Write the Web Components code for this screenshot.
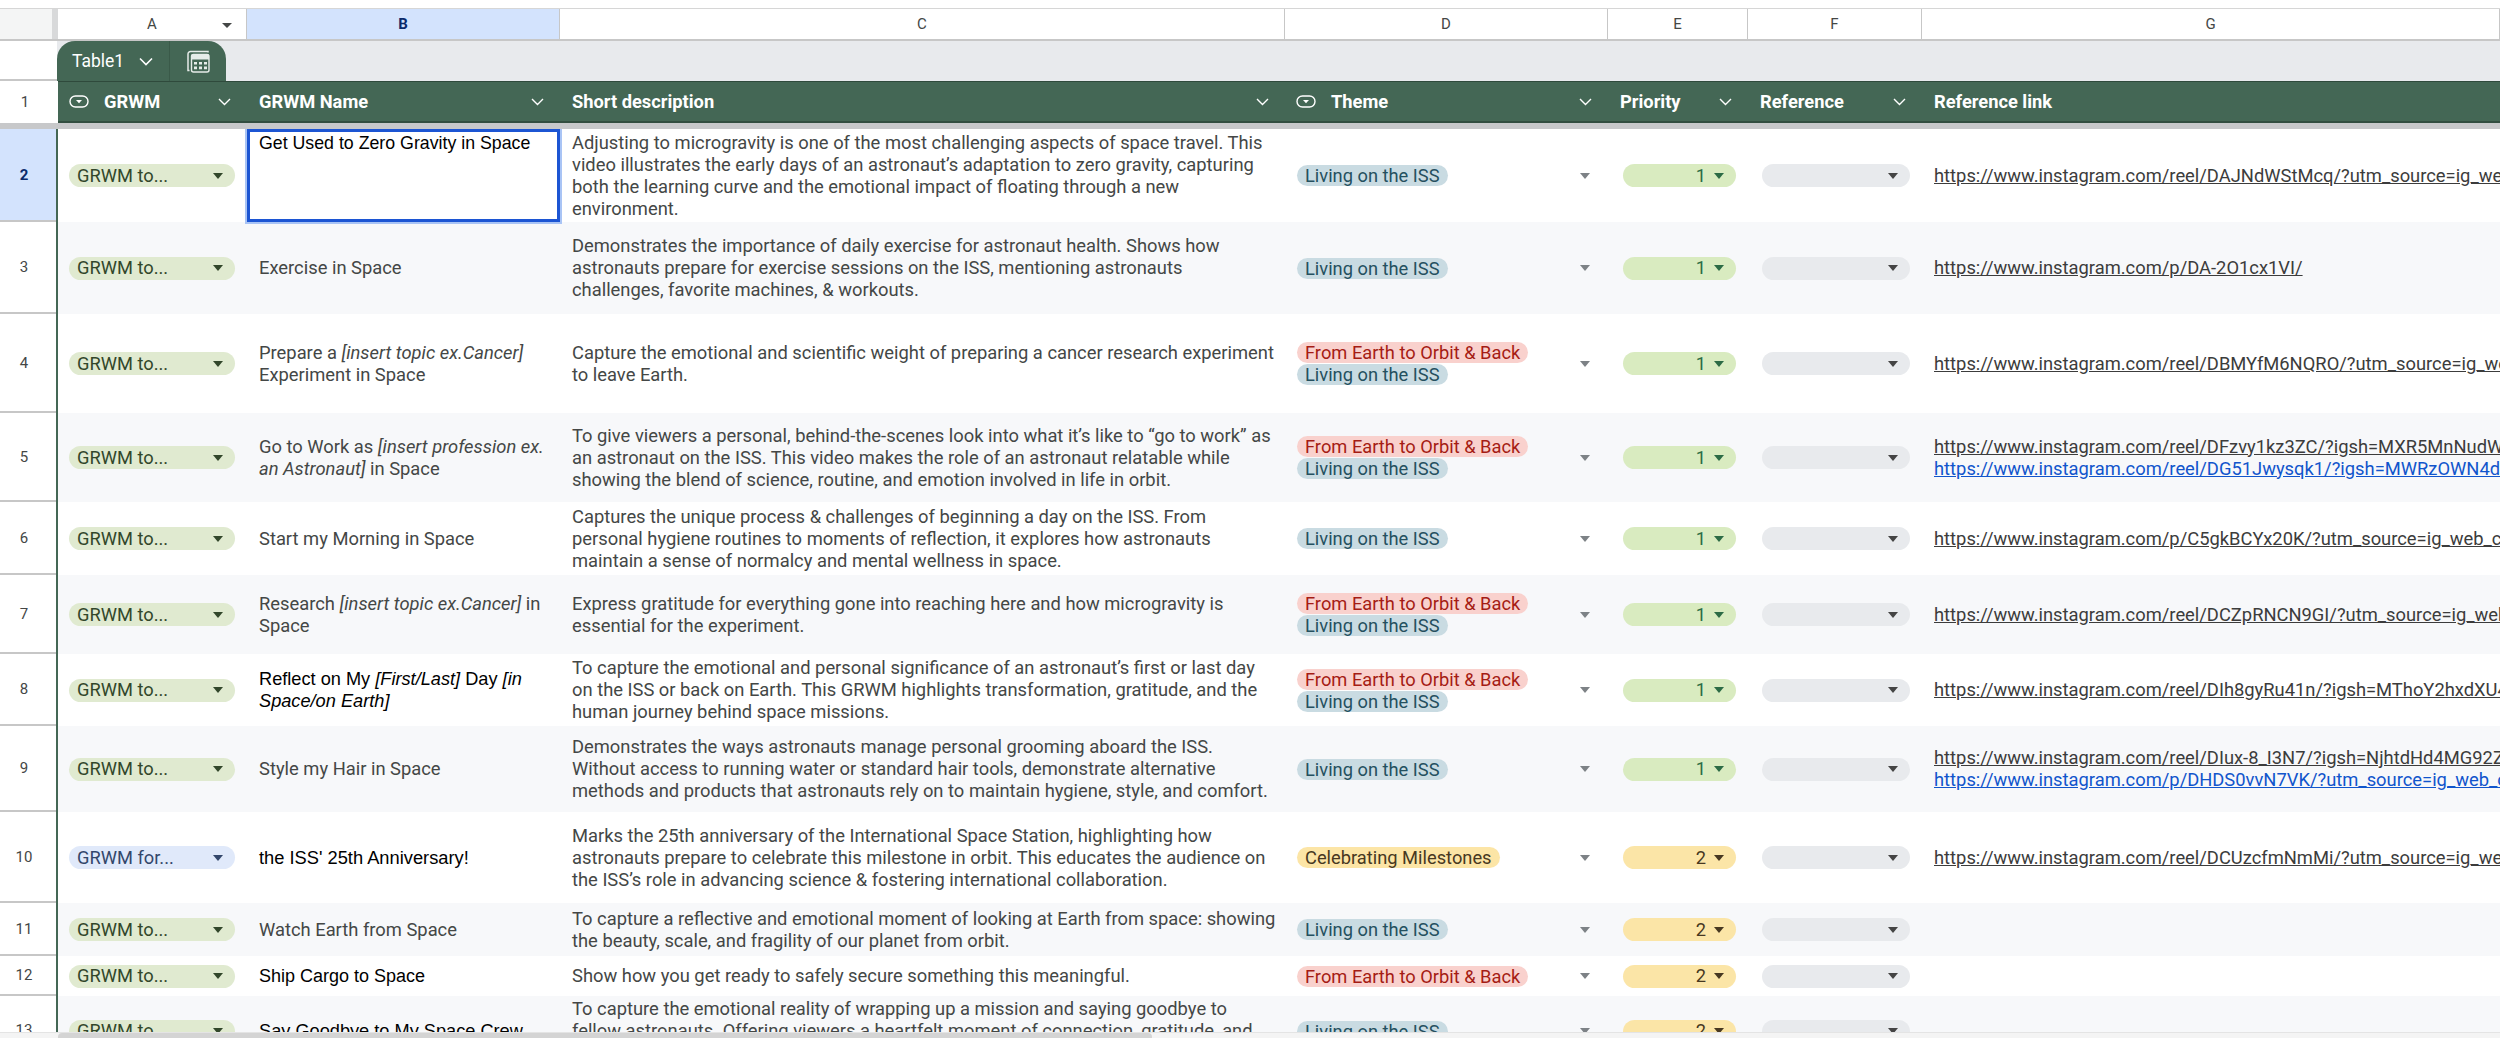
<!DOCTYPE html>
<html lang="en">
<head>
<meta charset="utf-8">
<title>GRWM sheet</title>
<style>
  html, body { margin: 0; height: 100%; overflow: hidden; background: #fff; }
</style>
</head>
<body>
<sheet-app>
  <sheet-colbar></sheet-colbar>
  <sheet-tabbar></sheet-tabbar>
  <sheet-headrow></sheet-headrow>
  <sheet-body></sheet-body>
  <sheet-scroll></sheet-scroll>
</sheet-app>
<script>
const appTemplate = document.createElement('template');
appTemplate.innerHTML = `
  <style>
    :host {
      display: flex;
      flex-direction: column;
      height: 1038px;
      overflow: hidden;
      padding-top: 8px;
      box-sizing: border-box;
      font-family: Roboto, "Liberation Sans", sans-serif;
      color: #444746;
      --cols: 56px 2px 189px 313px 725px 323px 140px 174px 578px;
    }
  </style>
  <slot></slot>
`;

class SheetApp extends HTMLElement {
  constructor() {
    super();
    this.attachShadow({ mode: 'open' }).appendChild(appTemplate.content.cloneNode(true));
  }
}

class SheetColbar extends HTMLElement {
  constructor() {
    super();
    const cells = [['A', 'a'], ['B', 'b on'], ['C', 'c'], ['D', 'd'], ['E', 'e'], ['F', 'f'], ['G', 'g']]
      .map(([letter, cls]) => `<div class="col ${cls}"><span>${letter}</span>${letter === 'A' ? '<i></i>' : ''}</div>`)
      .join('');
    this.attachShadow({ mode: 'open' }).innerHTML = `
      <style>
        :host {
          display: grid;
          grid-template-columns: var(--cols);
          height: 33px;
          flex-shrink: 0;
          box-sizing: border-box;
          border-top: 1px solid #d6d6d6;
          border-bottom: 2px solid #c7c7c7;
          font-size: 15px;
          color: #444746;
        }
        .corner { background: #f4f5f5; border-right: 6px solid #d8d9da; box-sizing: border-box; grid-column: span 2; }
        .col {
          display: flex;
          align-items: center;
          justify-content: center;
          position: relative;
          border-right: 1px solid #c7c7c7;
          box-sizing: border-box;
        }
        .on { background: #d3e3fd; color: #0b2a6b; font-weight: 700; }
        i {
          position: absolute;
          right: 14px;
          top: 14px;
          border-left: 5px solid transparent;
          border-right: 5px solid transparent;
          border-top: 5px solid #444746;
        }
      </style>
      <div class="corner"></div>${cells}`;
  }
}

class SheetTabbar extends HTMLElement {
  constructor() {
    super();
    this.attachShadow({ mode: 'open' }).innerHTML = `
      <style>
        :host {
          display: flex;
          height: 40px;
          flex-shrink: 0;
          background: #e8eaed;
        }
        .stub {
          width: 57px;
          background: #fff;
          box-sizing: border-box;
          border-bottom: 2px solid #c7c7c7;
        }
        .tab {
          display: flex;
          width: 169px;
          background: #446755;
          border-radius: 18px 18px 0 0;
          color: #fff;
          font-size: 17.5px;
          box-sizing: border-box;
        }
        .name {
          display: flex;
          align-items: center;
          gap: 15px;
          width: 113px;
          padding-left: 15px;
          box-sizing: border-box;
          border-right: 1px solid #3a5a49;
        }
        .calc { display: flex; align-items: center; justify-content: center; flex: 1; }
      </style>
      <div class="stub"></div>
      <div class="tab">
        <div class="name">Table1
          <svg width="14" height="9" viewBox="0 0 14 9"><path d="M1 1.5 7 7.5 13 1.5" fill="none" stroke="#fff" stroke-width="1.6"/></svg>
        </div>
        <div class="calc">
          <svg width="23" height="23" viewBox="0 0 23 23">
            <path d="M21 2.5V1.5H3.5A2.5 2.5 0 0 0 1 4V20.5H2.5" fill="none" stroke="#e6ece9" stroke-width="1.5"/>
            <rect x="4.5" y="4.5" width="17.5" height="17.5" rx="2" fill="none" stroke="#e6ece9" stroke-width="1.4"/>
            <rect x="4.5" y="4.5" width="17.5" height="5" fill="#e6ece9"/>
            <path d="M7 12h3v2.6H7zM12 12h3v2.6h-3zM17 12h3v2.6h-3zM7 16.6h3v2.6H7zM12 16.6h3v2.6h-3zM17 16.6h3v2.6h-3z" fill="#e6ece9"/>
          </svg>
        </div>
      </div>`;
  }
}

const pillIcon = `<svg class="pill" width="20" height="13" viewBox="0 0 20 13"><rect x="1" y="1" width="18" height="11" rx="5.5" fill="none" stroke="#fff" stroke-width="1.4"/><path d="M7 5h6l-3 3.2z" fill="#fff"/></svg>`;
const headChevron = `<svg class="chev" width="13" height="8" viewBox="0 0 13 8"><path d="M1 1 6.5 6.5 12 1" fill="none" stroke="#fff" stroke-width="1.4"/></svg>`;

class SheetHeadrow extends HTMLElement {
  constructor() {
    super();
    const cols = [
      ['GRWM', true, true], ['GRWM Name', false, true], ['Short description', false, true],
      ['Theme', true, true], ['Priority', false, true], ['Reference', false, true], ['Reference link', false, false]
    ];
    const cells = cols.map(([label, pill, chev]) =>
      `<div class="head${pill ? ' haspill' : ''}">${pill ? pillIcon : ''}<span>${label}</span>${chev ? headChevron : ''}</div>`).join('');
    this.attachShadow({ mode: 'open' }).innerHTML = `
      <style>
        :host {
          display: grid;
          grid-template-columns: var(--cols);
          height: 48px;
          flex-shrink: 0;
          box-sizing: border-box;
          border-bottom: 6px solid #c7c8ca;
        }
        .num { display: flex; align-items: center; justify-content: center; padding-right: 8px; font-size: 15px; background: #fff; grid-column: span 2; }
        .head {
          display: flex;
          align-items: center;
          gap: 15px;
          padding: 0 16px 0 12px;
          background: #446755;
          border-top: 1px solid #2f4a3c;
          border-bottom: 2px solid #324e40;
          color: #fff;
          font-size: 18.3px;
          font-weight: 700;
          min-width: 0;
          white-space: nowrap;
        }
        .haspill { padding-left: 11px; }
        .chev { margin-left: auto; }
      </style>
      <div class="num">1</div>${cells}`;
  }
}

class DropChip extends HTMLElement {
  constructor() {
    super();
    this.attachShadow({ mode: 'open' }).innerHTML = `
      <style>
        :host {
          display: flex;
          align-items: center;
          height: 23px;
          border-radius: 12px;
          padding: 0 12px 0 8px;
          font-size: 18.3px;
          background: var(--chip-bg, #e8eaed);
          color: var(--chip-ink, #444);
          box-sizing: border-box;
          white-space: nowrap;
        }
        .label { flex: 1; text-align: var(--chip-align, left); padding-right: var(--chip-gap, 0); }
        i {
          border-left: 5.5px solid transparent;
          border-right: 5.5px solid transparent;
          border-top: 6px solid var(--chip-arrow, #444);
        }
      </style>
      <span class="label"><slot></slot></span><i></i>`;
  }
}

class ThemeTags extends HTMLElement {
  constructor() {
    super();
    this.attachShadow({ mode: 'open' }).innerHTML = `
      <style>
        :host { display: flex; align-items: center; justify-content: space-between; padding: 0 18px 0 12px; }
        .tags { display: flex; flex-direction: column; align-items: flex-start; gap: 1px; }
        i {
          border-left: 5.5px solid transparent;
          border-right: 5.5px solid transparent;
          border-top: 6px solid #7d8286;
        }
      </style>
      <div class="tags"><slot></slot></div><i></i>`;
  }
}

class ThemeTag extends HTMLElement {
  constructor() {
    super();
    const kinds = {
      iss: ['#c9dbe2', '#25505f'],
      orbit: ['#f9d1cd', '#a51c14'],
      mile: ['#fce5a6', '#473821']
    };
    const [bg, ink] = kinds[this.getAttribute('kind')];
    this.attachShadow({ mode: 'open' }).innerHTML = `
      <style>
        :host {
          display: block;
          height: 21px;
          line-height: 21px;
          border-radius: 11px;
          padding: 0 8px;
          font-size: 18.3px;
          white-space: nowrap;
          background: ${bg};
          color: ${ink};
        }
      </style>
      <slot></slot>`;
  }
}

class SheetRow extends HTMLElement {
  constructor() {
    super();
    const selected = this.hasAttribute('selected');
    this.attachShadow({ mode: 'open' }).innerHTML = `
      <style>
        :host {
          display: grid;
          grid-template-columns: var(--cols);
          flex-shrink: 0;
          height: ${this.getAttribute('h')}px;
          position: relative;
          z-index: ${selected ? 2 : 0};
          background: ${this.hasAttribute('alt') ? '#f7f8fa' : '#fff'};
          font-size: 18.35px;
          line-height: 22px;
          color: #444746;
        }
        .num {
          display: flex;
          align-items: center;
          justify-content: center;
          padding: 0 8px 0 0;
          background: ${selected ? '#d3e3fd' : '#fff'};
          color: ${selected ? '#0b2a6b' : '#444746'};
          font-weight: ${selected ? 700 : 400};
          font-size: 15px;
          box-sizing: border-box;
          border-bottom: 2px solid #c7c7c7;
        }
        .bar { background: #446755; }
        .cell { display: flex; align-items: center; min-width: 0; overflow: hidden; white-space: nowrap; }
        .a { padding: 0 12px 0 11px; }
        .a ::slotted(*), .e ::slotted(*), .f ::slotted(*) { flex: 1; }
        .b { padding: 0 12px; }
        .c { padding: 0 12px; }
        .d { display: block; align-self: stretch; }
        .d ::slotted(*) { height: 100%; }
        .e { padding: 0 12px 0 15px; }
        .f { padding: 0 12px 0 14px; }
        .g { padding-left: 12px; }
        .sel {
          align-items: flex-start;
          overflow: visible;
          padding-top: 3px;
          background: #fff;
          color: #000;
          box-shadow: inset 0 0 0 3px #1c55d3, 0 0 0 2px #a9c4f5;
          position: relative;
        }
      </style>
      <div class="num">${this.getAttribute('num')}</div>
      <div class="bar"></div>
      <div class="cell a"><slot name="a"></slot></div>
      <div class="cell b${selected ? ' sel' : ''}"><slot name="b"></slot></div>
      <div class="cell c"><slot name="c"></slot></div>
      <div class="cell d"><slot name="d"></slot></div>
      <div class="cell e"><slot name="e"></slot></div>
      <div class="cell f"><slot name="f"></slot></div>
      <div class="cell g"><slot name="g"></slot></div>`;
  }
}

const ROWS = [
  { n: 2, h: 93, a: 'to', black: 17.75, b: 'Get Used to Zero Gravity in Space',
    c: 'Adjusting to microgravity is one of the most challenging aspects of space travel. This<br>video illustrates the early days of an astronaut’s adaptation to zero gravity, capturing<br>both the learning curve and the emotional impact of floating through a new<br>environment.',
    d: ['iss'], e: 1, g: ['https://www.instagram.com/reel/DAJNdWStMcq/?utm_source=ig_web_copy_link'] },
  { n: 3, h: 92, a: 'to', b: 'Exercise in Space',
    c: 'Demonstrates the importance of daily exercise for astronaut health. Shows how<br>astronauts prepare for exercise sessions on the ISS, mentioning astronauts<br>challenges, favorite machines, &amp; workouts.',
    d: ['iss'], e: 1, g: ['https://www.instagram.com/p/DA-2O1cx1VI/'] },
  { n: 4, h: 99, a: 'to', b: 'Prepare a <i>[insert topic ex.Cancer]</i><br>Experiment in Space',
    c: 'Capture the emotional and scientific weight of preparing a cancer research experiment<br>to leave Earth.',
    d: ['orbit', 'iss'], e: 1, g: ['https://www.instagram.com/reel/DBMYfM6NQRO/?utm_source=ig_web_copy_link'] },
  { n: 5, h: 89, a: 'to', b: 'Go to Work as <i>[insert profession ex.<br>an Astronaut]</i> in Space',
    c: 'To give viewers a personal, behind-the-scenes look into what it’s like to “go to work” as<br>an astronaut on the ISS. This video makes the role of an astronaut relatable while<br>showing the blend of science, routine, and emotion involved in life in orbit.',
    d: ['orbit', 'iss'], e: 1, g: ['https://www.instagram.com/reel/DFzvy1kz3ZC/?igsh=MXR5MnNudW', 'https://www.instagram.com/reel/DG51Jwysqk1/?igsh=MWRzOWN4d'] },
  { n: 6, h: 73, a: 'to', b: 'Start my Morning in Space',
    c: 'Captures the unique process &amp; challenges of beginning a day on the ISS. From<br>personal hygiene routines to moments of reflection, it explores how astronauts<br>maintain a sense of normalcy and mental wellness in space.',
    d: ['iss'], e: 1, g: ['https://www.instagram.com/p/C5gkBCYx20K/?utm_source=ig_web_copy_link'] },
  { n: 7, h: 79, a: 'to', b: 'Research <i>[insert topic ex.Cancer]</i> in<br>Space',
    c: 'Express gratitude for everything gone into reaching here and how microgravity is<br>essential for the experiment.',
    d: ['orbit', 'iss'], e: 1, g: ['https://www.instagram.com/reel/DCZpRNCN9GI/?utm_source=ig_web_copy_link'] },
  { n: 8, h: 72, a: 'to', black: 18.2, b: 'Reflect on My <i>[First/Last]</i> Day <i>[in<br>Space/on Earth]</i>',
    c: 'To capture the emotional and personal significance of an astronaut’s first or last day<br>on the ISS or back on Earth. This GRWM highlights transformation, gratitude, and the<br>human journey behind space missions.',
    d: ['orbit', 'iss'], e: 1, g: ['https://www.instagram.com/reel/DIh8gyRu41n/?igsh=MThoY2hxdXU4'] },
  { n: 9, h: 86, a: 'to', b: 'Style my Hair in Space',
    c: 'Demonstrates the ways astronauts manage personal grooming aboard the ISS.<br>Without access to running water or standard hair tools, demonstrate alternative<br>methods and products that astronauts rely on to maintain hygiene, style, and comfort.',
    d: ['iss'], e: 1, g: ['https://www.instagram.com/reel/DIux-8_I3N7/?igsh=NjhtdHd4MG92Z', 'https://www.instagram.com/p/DHDS0vvN7VK/?utm_source=ig_web_copy_link'] },
  { n: 10, h: 91, a: 'for', black: 18.3, b: 'the ISS\' 25th Anniversary!',
    c: 'Marks the 25th anniversary of the International Space Station, highlighting how<br>astronauts prepare to celebrate this milestone in orbit. This educates the audience on<br>the ISS’s role in advancing science &amp; fostering international collaboration.',
    d: ['mile'], e: 2, g: ['https://www.instagram.com/reel/DCUzcfmNmMi/?utm_source=ig_web_copy_link'] },
  { n: 11, h: 53, a: 'to', b: 'Watch Earth from Space',
    c: 'To capture a reflective and emotional moment of looking at Earth from space: showing<br>the beauty, scale, and fragility of our planet from orbit.',
    d: ['iss'], e: 2, g: [] },
  { n: 12, h: 40, a: 'to', black: 18, b: 'Ship Cargo to Space',
    c: 'Show how you get ready to safely secure something this meaningful.',
    d: ['orbit'], e: 2, g: [] },
  { n: 13, h: 70, a: 'to', black: 18.2, b: 'Say Goodbye to My Space Crew',
    c: 'To capture the emotional reality of wrapping up a mission and saying goodbye to<br>fellow astronauts. Offering viewers a heartfelt moment of connection, gratitude, and<br>reflection.',
    d: ['iss'], e: 2, g: [] }
];

const THEME_LABEL = { iss: 'Living on the ISS', orbit: 'From Earth to Orbit &amp; Back', mile: 'Celebrating Milestones' };

class SheetBody extends HTMLElement {
  constructor() {
    super();
    this.attachShadow({ mode: 'open' }).innerHTML = `
      <style>
        :host {
          display: flex;
          flex-direction: column;
          flex: 1;
          min-height: 0;
          overflow: hidden;
        }
      </style>
      <slot></slot>`;
  }

  connectedCallback() {
    this.innerHTML = ROWS.map((row) => {
      const grwmTone = row.a === 'for'
        ? '--chip-bg:#e0e9fa;--chip-ink:#33476b;--chip-arrow:#33476b'
        : '--chip-bg:#e0ead0;--chip-ink:#32472b;--chip-arrow:#32472b';
      const rankTone = row.e === 1
        ? '--chip-bg:#d9ebc0;--chip-ink:#2c6b45;--chip-arrow:#2c6b45'
        : '--chip-bg:#fbe5a7;--chip-ink:#473821;--chip-arrow:#473821';
      const tags = row.d.map((kind) => `<theme-tag kind="${kind}">${THEME_LABEL[kind]}</theme-tag>`).join('');
      const links = row.g.map((url, i) =>
        `<a style="color:${i ? '#1155cc' : '#3c3c3c'};display:block" href="#">${url}</a>`).join('');
      const nameFont = row.black ? `font-family:'Liberation Sans',sans-serif;color:#000;font-size:${row.black}px` : '';
      return `<sheet-row num="${row.n}" h="${row.h}"${row.n % 2 ? ' alt' : ''}${row.n === 2 ? ' selected' : ''}>
        <drop-chip slot="a" style="${grwmTone}">GRWM ${row.a}...</drop-chip>
        <div slot="b" style="${nameFont}">${row.b}</div>
        <div slot="c">${row.c}</div>
        <theme-tags slot="d">${tags}</theme-tags>
        <drop-chip slot="e" style="${rankTone};--chip-align:right;--chip-gap:8px">${row.e}</drop-chip>
        <drop-chip slot="f"></drop-chip>
        <div slot="g">${links}</div>
      </sheet-row>`;
    }).join('');
  }
}

class SheetScroll extends HTMLElement {
  constructor() {
    super();
    this.attachShadow({ mode: 'open' }).innerHTML = `
      <style>
        :host {
          display: flex;
          height: 6px;
          flex-shrink: 0;
          background: #f4f4f4;
          padding-left: 58px;
          border-top: 1px solid #e4e4e4;
          box-sizing: border-box;
        }
        div { width: 1094px; background: #d4d4d4; border-radius: 4px 4px 0 0; }
      </style>
      <div></div>`;
  }
}

customElements.define('sheet-app', SheetApp);
customElements.define('sheet-colbar', SheetColbar);
customElements.define('sheet-tabbar', SheetTabbar);
customElements.define('sheet-headrow', SheetHeadrow);
customElements.define('drop-chip', DropChip);
customElements.define('theme-tags', ThemeTags);
customElements.define('theme-tag', ThemeTag);
customElements.define('sheet-row', SheetRow);
customElements.define('sheet-body', SheetBody);
customElements.define('sheet-scroll', SheetScroll);
</script>
</body>
</html>
